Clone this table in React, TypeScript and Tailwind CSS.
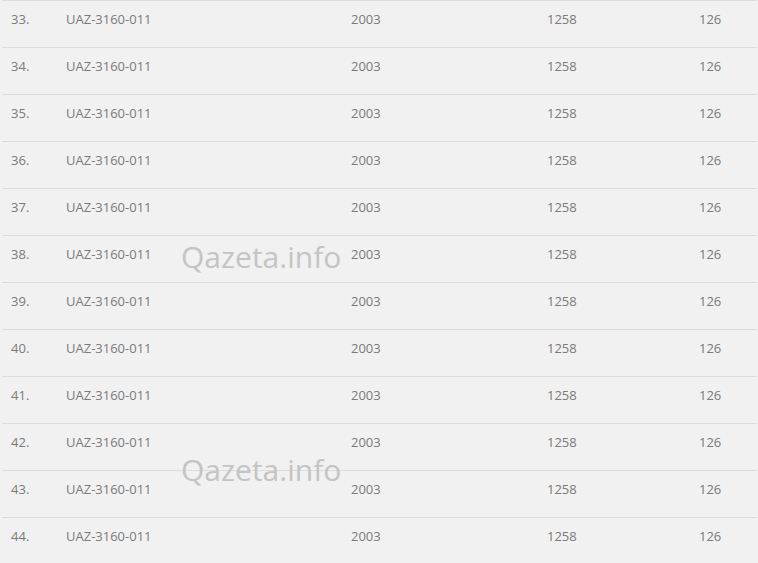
const rows = Array.from({ length: 12 }, (_, i) => ({
  n: 33 + i,
  model: 'UAZ-3160-011',
  year: '2003',
  price: '1258',
  hp: '126',
}));

export default function App() {
  return (
    <div className="relative w-[758px] h-[563px] overflow-hidden bg-[#f1f1f1] pl-[2px] pr-[1px] font-['Open_Sans',sans-serif] text-[13px] text-[#7a7a7a]">
      <div className="flex flex-col">
        {rows.map((r) => (
          <div key={r.n} className="flex h-[47px] border-t border-[#dcdcdc] pt-[9px]">
            <div className="w-[64px] pl-[9px]">{r.n}.</div>
            <div className="w-[285px]">{r.model}</div>
            <div className="w-[196px]">{r.year}</div>
            <div className="w-[152px]">{r.price}</div>
            <div className="flex-1">{r.hp}</div>
          </div>
        ))}
      </div>

      {/* watermark */}
      <div className="absolute left-[181px] top-[239px] text-[30px] text-[#c4c4c4] leading-[36px]">Qazeta.info</div>
      <div className="absolute left-[181px] top-[452px] text-[30px] text-[#c4c4c4] leading-[36px]">Qazeta.info</div>
    </div>
  );
}
